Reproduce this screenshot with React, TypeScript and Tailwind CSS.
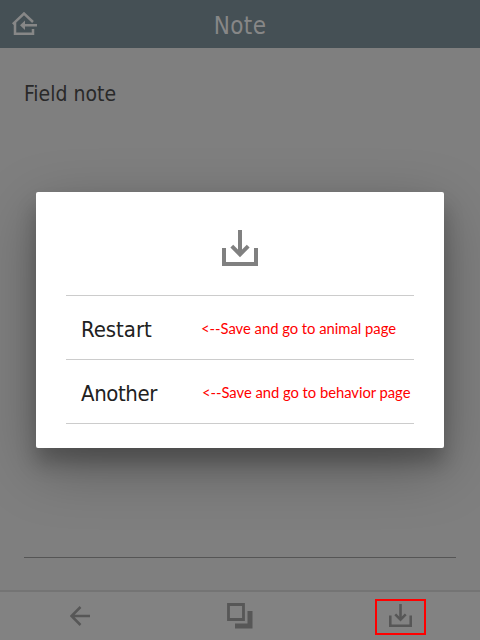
import React from "react";

function SaveIcon({ size }: { size: number }) {
  return (
    <svg width={size} height={size} viewBox="0 0 36 36" fill="none" stroke="currentColor" strokeWidth="4">
      <path d="M2 18v16h32V18M18 0v24" />
      <path d="M9.8 16.2L18 24.4l8.2-8.2" />
    </svg>
  );
}

function Header() {
  return (
    <header className="grid h-12 shrink-0 grid-cols-[48px_1fr_48px] items-center bg-[#455055] text-[#878787]">
      <svg className="ml-3" width="25" height="24" viewBox="0 0 25 24" fill="none" stroke="currentColor" strokeWidth="2.5">
        <path d="M.8 12.2L12 1.5l9 8.5" />
        <path d="M3 10.5v11.2h18v-4.7M25 13.2H12" />
        <path d="M8 13.2l5-4.8v9.6z" fill="currentColor" stroke="none" />
      </svg>
      <h1 className="pt-[3px] text-center text-[24px] leading-8 tracking-[0.4px]">Note</h1>
    </header>
  );
}

function Option({ label, hint, labelClass, hintClass }: { label: string; hint: string; labelClass: string; hintClass: string }) {
  return (
    <div className="flex h-16 items-center border-b border-[#cccccc] pl-[15px]">
      <span className={`w-[120px] shrink-0 pt-[5px] text-[22px] leading-8 text-[#212121] ${labelClass}`}>{label}</span>
      <span className={`whitespace-nowrap font-['Lato',sans-serif] text-[14.8px] leading-5 text-[#ff0000] ${hintClass}`}>{hint}</span>
    </div>
  );
}

export default function App() {
  return (
    <div className="relative flex h-[640px] w-[480px] flex-col overflow-hidden bg-[#7f7f7f] font-['DejaVu_Sans_Condensed','DejaVu_Sans',sans-serif] [font-stretch:condensed]">
      <Header />
      <main className="flex flex-1 flex-col px-6 pb-[32px] pt-[30px]">
        <div className="flex-1 border-b border-[#555555] text-[21px] leading-8 text-[#292929]">Field note</div>
      </main>
      <footer className="grid h-[50px] shrink-0 grid-cols-3 items-center justify-items-center border-t-2 border-[#747474] bg-[#828282] text-[#575757]">
        <svg width="20" height="20" viewBox="0 0 20 20" fill="none" stroke="currentColor" strokeWidth="2.5">
          <path d="M20 10H2M10.5 1L1.5 10l9 9" />
        </svg>
        <svg width="26" height="26" viewBox="0 0 26 26" fill="none" stroke="currentColor">
          <path d="M1.5 1.5h15v15h-15z" strokeWidth="2.8" />
          <path d="M23 8v15H8" strokeWidth="5" />
        </svg>
        <div className="mt-0.5 flex h-9 w-[51px] items-center justify-center border-2 border-[#ff0000] pb-[3px]">
          <SaveIcon size={23} />
        </div>
      </footer>
      <section className="absolute left-9 top-48 h-64 w-[408px] rounded-[2px] bg-white px-[30px] shadow-[0_19px_60px_rgba(0,0,0,0.3),0_15px_20px_rgba(0,0,0,0.22)]">
        <div className="flex h-[104px] items-center justify-center border-b border-[#cccccc] pt-[9px] text-[#808080]">
          <SaveIcon size={36} />
        </div>
        <Option label="Restart" hint="<--Save and go to animal page" labelClass="tracking-[-0.05px]" hintClass="tracking-[-0.02px]" />
        <Option label="Another" hint="<--Save and go to behavior page" labelClass="tracking-[-0.4px]" hintClass="ml-px tracking-[-0.04px]" />
      </section>
    </div>
  );
}
